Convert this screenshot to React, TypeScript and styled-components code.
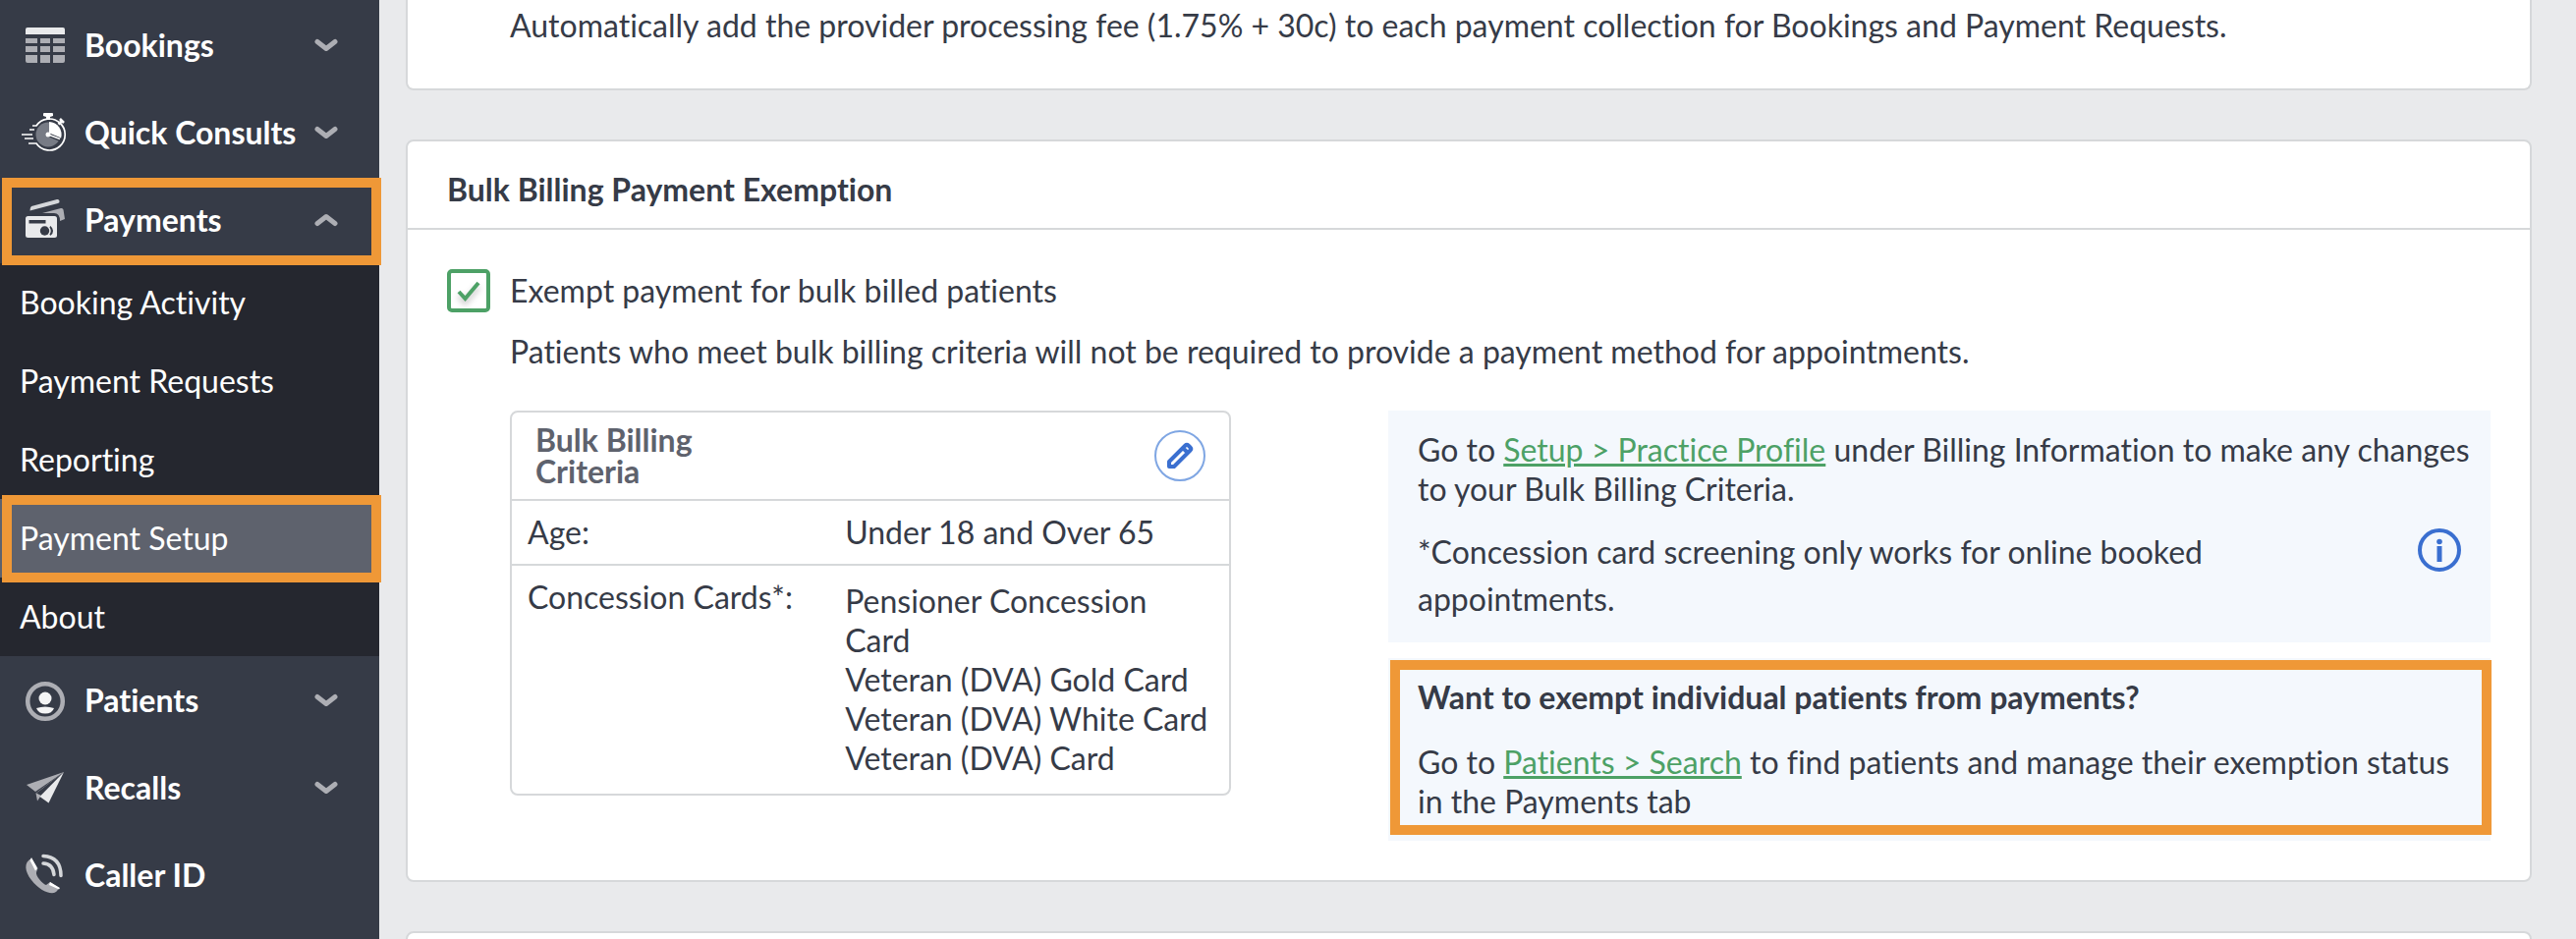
import React from 'react';
import styled, { createGlobalStyle, css } from 'styled-components';

const color = {
  nav: '#363b47',
  navSub: '#25272f',
  navActive: '#5e626d',
  navIcon: '#adaeb4',
  navIconLight: '#e9eaec',
  page: '#e9eaec',
  line: '#d6d8da',
  text: '#363b47',
  muted: '#5e626d',
  green: '#4da166',
  blue: '#3a6fd0',
  blueLight: '#7fa6e3',
  panel: '#f4f8fd',
  callout: '#ef9837',
};

const GlobalStyle = createGlobalStyle`
  *, *::before, *::after { box-sizing: border-box; }
  html { background: ${color.page}; }
  body {
    margin: 0;
    overflow: hidden;
    color: ${color.text};
    font: 400 32px/40px Lato, "Liberation Sans", sans-serif;
    font-variant-ligatures: none;
  }
  p, h2, h3, ul { margin: 0; }
`;

const Page = styled.div`
  display: flex;
  height: 100vh;
  overflow: hidden;
`;

const Sidebar = styled.nav`
  flex: 0 0 386px;
  padding-top: 1px;
  background: ${color.nav};
`;

const NavGroup = styled.div`
  position: relative;
`;

const NavButton = styled.button`
  display: flex;
  align-items: center;
  width: 100%;
  height: 89px;
  padding: 0 42px 0 20px;
  border: 0;
  background: none;
  color: #fff;
  font: inherit;
  font-variant-ligatures: none;
  font-weight: 700;
  text-align: left;
  white-space: nowrap;
  cursor: pointer;
`;

const NavIcon = styled.svg`
  flex: none;
  width: 48px;
  height: 48px;
  margin-right: 18px;
`;

const NavLabel = styled.span`
  flex: 1;
`;

const Chevron = styled.svg<{ $open?: boolean }>`
  flex: none;
  width: 24px;
  height: 14px;
  fill: none;
  stroke: ${color.navIcon};
  stroke-width: 5;
  stroke-linecap: round;
  stroke-linejoin: round;
  ${(p) => p.$open && css`transform: rotate(180deg);`}
`;

const SubMenu = styled.ul`
  padding: 0;
  list-style: none;
  background: ${color.navSub};
`;

const SubItem = styled.li`
  position: relative;
`;

const SubLink = styled.a<{ $active?: boolean }>`
  display: flex;
  align-items: center;
  height: 80px;
  padding: 0 20px;
  color: #fff;
  text-decoration: none;
  background: ${(p) => (p.$active ? color.navActive : 'transparent')};
`;

const Callout = styled.span<{ $inset: string }>`
  position: absolute;
  z-index: 1;
  inset: ${(p) => p.$inset};
  border: 10px solid ${color.callout};
  pointer-events: none;
`;

const Main = styled.main`
  flex: 1;
  min-width: 0;
  display: flex;
  flex-direction: column;
  gap: 50px;
  padding: 0 45px 0 27px;
`;

const Card = styled.section<{ $cut?: boolean }>`
  flex: none;
  border: 2px solid ${color.line};
  border-radius: 8px;
  background: #fff;
  ${(p) => p.$cut && css`
    border-top: 0;
    border-radius: 0 0 8px 8px;
  `}
`;

const FeeNote = styled.p`
  padding: 6px 40px 44px 104px;
`;

const CardTitle = styled.h2`
  padding: 29px 40px 19px;
  border-bottom: 2px solid ${color.line};
  font-size: 32px;
  line-height: 40px;
  font-weight: 700;
`;

const CardBody = styled.div`
  padding: 40px;
`;

const CheckRow = styled.label`
  display: flex;
  align-items: center;
  gap: 20px;
  cursor: pointer;
`;

const CheckBox = styled.span`
  display: grid;
  flex: none;
  width: 44px;
  height: 44px;
  > * { grid-area: 1 / 1; }
  > svg {
    place-self: center;
    width: 24px;
    height: 24px;
    fill: none;
    stroke: ${color.green};
    stroke-width: 4;
    filter: drop-shadow(0 4px 3px rgba(0, 0, 0, 0.25));
    pointer-events: none;
  }
`;

const CheckInput = styled.input`
  appearance: none;
  width: 44px;
  height: 44px;
  margin: 0;
  border: 4px solid ${color.green};
  border-radius: 5px;
  background: #fff;
  cursor: pointer;
`;

const Indented = styled.div`
  padding-left: 64px;
`;

const Description = styled.p`
  padding: 20px 0 40px;
`;

const Columns = styled.div`
  display: grid;
  grid-template-columns: 734fr 1122fr;
  align-items: start;
  column-gap: 160px;
`;

const CriteriaBox = styled.div`
  border: 2px solid ${color.line};
  border-radius: 8px;
`;

const CriteriaHead = styled.div`
  display: flex;
  align-items: center;
  justify-content: space-between;
  height: 88px;
  padding: 0 24px;
`;

const CriteriaTitle = styled.h3`
  width: 200px;
  color: ${color.muted};
  font-size: 32px;
  line-height: 32px;
  font-weight: 700;
`;

const EditButton = styled.button`
  display: grid;
  place-items: center;
  width: 52px;
  height: 52px;
  padding: 0;
  border: 2px solid ${color.blueLight};
  border-radius: 50%;
  background: #fff;
  cursor: pointer;
`;

const CriteriaTable = styled.table`
  width: 100%;
  border-collapse: separate;
  border-spacing: 0;
  table-layout: fixed;
  th, td {
    padding: 12px 16px;
    border-top: 2px solid ${color.line};
    text-align: left;
    vertical-align: top;
    font-weight: 400;
  }
  th { width: 44%; }
  td { padding-left: 18px; }
  tr + tr td { padding-top: 16px; padding-bottom: 16px; }
`;

const Side = styled.div`
  display: flex;
  flex-direction: column;
  gap: 16px;
`;

const InfoPanel = styled.div<{ $wide?: boolean }>`
  position: relative;
  padding: 20px ${(p) => (p.$wide ? 10 : 30)}px 20px 30px;
  background: ${color.panel};
`;

const PanelTitle = styled.h3`
  padding-bottom: 26px;
  font-size: 32px;
  line-height: 40px;
  font-weight: 700;
`;

const ScreeningRow = styled.div`
  display: flex;
  align-items: flex-start;
  justify-content: space-between;
  gap: 200px;
  padding: 20px 20px 0 0;
  line-height: 48px;
`;

const InfoIcon = styled.svg`
  flex: none;
  width: 44px;
  height: 44px;
`;

const TextLink = styled.a`
  color: ${color.green};
  text-decoration: underline;
  text-decoration-thickness: 3px;
`;

const NextSection = styled.div`
  min-height: 88px;
`;

const ICONS = {
  bookings: (
    <>
      <path d="M8 6h36a2 2 0 0 1 2 2v5H6V8a2 2 0 0 1 2-2z" fill="#e9eaec" />
      <path d="M6 17h12v5H6zM21 17h10v5H21zM34 17h12v5H34zM6 25h12v6H6zM21 25h10v6H21zM34 25h12v6H34zM6 34h12v8H8a2 2 0 0 1-2-2zM21 34h10v8H21zM34 34h12v6a2 2 0 0 1-2 2H34z" fill={color.navIcon} />
    </>
  ),
  quick: (
    <>
      <circle cx="29" cy="26" r="12.5" fill="#777b85" />
      <path d="M30 25V13a13 13 0 0 1 12 17z" fill="#fff" />
      <path d="M29 26l12 5" stroke={color.nav} strokeWidth="4" />
      <path d="M29 26l12 4.500" stroke="#fff" strokeWidth="1.500" />
      <circle cx="29" cy="26" r="2.500" fill="#fff" />
      <path d="M13 17h4a16 16 0 1 1 0 18h-8M10 21h5M2 26h11M5 30h9M29 6v4" fill="none" stroke="#fff" strokeWidth="1.700" />
      <path d="M25 4h8a1 1 0 0 1 1 1v2l-3 1v3h-4V8l-3-1V5a1 1 0 0 1 1-1z" fill="#fff" />
      <path d="M41 10l4 4M39.500 15.500l3-3" stroke="#fff" strokeWidth="2.500" />
    </>
  ),
  payments: (
    <>
      <path d="M12 10l26-7q2-.5 2.500 1.500t-1.500 2.500L10.500 14.500q0-3.500 1.500-4.500z" fill="#d5d7da" />
      <path d="M23 17l19-5q2-.4 2.500 1.500L46 23l-5 2q0-8-6-8z" fill={color.navIcon} />
      <rect x="6" y="20" width="32" height="22" rx="2.500" fill={color.navIconLight} />
      <path d="M9.500 24h17v3.500h-17z" fill={color.nav} />
      <circle cx="25.500" cy="35" r="4.700" fill={color.nav} />
      <path d="M31 30.800a5 5 0 0 1 0 8.400q3-4.200 0-8.400z" fill={color.nav} stroke={color.nav} strokeWidth="1.500" />
    </>
  ),
  patients: (
    <>
      <circle cx="26" cy="25" r="17.800" fill="none" stroke={color.navIcon} strokeWidth="4.500" />
      <circle cx="26" cy="22" r="6.500" fill="#f4f4f5" />
      <path d="M17 32q9-3 18 0-2 5.500-9 5.500t-9-5.500z" fill="#f4f4f5" />
    </>
  ),
  recalls: (
    <>
      <path d="M45 8L7 21l9 7z" fill={color.navIcon} />
      <path d="M45 8L16.500 29.500l1.500 8L21 33z" fill={color.navIcon} />
      <path d="M45 8L17 29.500l6 3z" fill={color.nav} />
      <path d="M45 8L20.500 33 29.500 39.500z" fill={color.navIconLight} />
    </>
  ),
  caller: (
    <>
      <path d="M12 7c-8 4-7 13 0 22s16 14 23 13c2-.3 4-3 5-5l-9-6-4 3c-3-.5-11-9-10-13l1.500-4z" fill={color.navIcon} />
      <path d="M12 6l5 9 .8 2.200L16 19.500 10.500 9zM31 31l10 6-1 1.500-10-4.500z" fill="#fff" />
      <path d="M24 4.500q18 1 18 20M24 12q10 .5 11 11.500" fill="none" stroke="#d5d7da" strokeWidth="3.500" strokeLinecap="round" />
    </>
  ),
};

function NavItem({ icon, label, arrow = true, open }: {
  icon: keyof typeof ICONS;
  label: string;
  arrow?: boolean;
  open?: boolean;
}) {
  return (
    <NavGroup>
      <NavButton type="button" aria-expanded={arrow ? !!open : undefined}>
        <NavIcon viewBox="0 0 48 48" aria-hidden="true">{ICONS[icon]}</NavIcon>
        <NavLabel>{label}</NavLabel>
        {arrow && (
          <Chevron $open={open} viewBox="0 0 24 14" aria-hidden="true">
            <path d="M3 3.500l9 7 9-7" />
          </Chevron>
        )}
      </NavButton>
      {open && <Callout $inset="2px -2px -2px 2px" />}
    </NavGroup>
  );
}

const PAYMENT_LINKS = ['Booking Activity', 'Payment Requests', 'Reporting', 'Payment Setup', 'About'];

const CARDS = [
  'Pensioner Concession Card',
  'Veteran (DVA) Gold Card',
  'Veteran (DVA) White Card',
  'Veteran (DVA) Card',
];

export default function App() {
  return (
    <>
      <GlobalStyle />
      <Page>
        <Sidebar aria-label="Main">
          <NavItem icon="bookings" label="Bookings" />
          <NavItem icon="quick" label="Quick Consults" />
          <NavItem icon="payments" label="Payments" open />
          <SubMenu>
            {PAYMENT_LINKS.map((name) => {
              const active = name === 'Payment Setup';
              return (
                <SubItem key={name}>
                  <SubLink href="#" $active={active} aria-current={active ? 'page' : undefined}>{name}</SubLink>
                  {active && <Callout $inset="-4px -2px -5px 2px" />}
                </SubItem>
              );
            })}
          </SubMenu>
          <NavItem icon="patients" label="Patients" />
          <NavItem icon="recalls" label="Recalls" />
          <NavItem icon="caller" label="Caller ID" arrow={false} />
        </Sidebar>

        <Main>
          <Card $cut>
            <FeeNote>
              Automatically add the provider processing fee (1.75% + 30c) to each payment collection for Bookings and
              Payment Requests.
            </FeeNote>
          </Card>

          <Card>
            <CardTitle>Bulk Billing Payment Exemption</CardTitle>
            <CardBody>
              <CheckRow>
                <CheckBox>
                  <CheckInput type="checkbox" defaultChecked />
                  <svg viewBox="0 0 24 24" aria-hidden="true"><path d="M2 13l6.500 7L22 4" /></svg>
                </CheckBox>
                Exempt payment for bulk billed patients
              </CheckRow>
              <Indented>
                <Description>
                  Patients who meet bulk billing criteria will not be required to provide a payment method for
                  appointments.
                </Description>
                <Columns>
                  <CriteriaBox>
                    <CriteriaHead>
                      <CriteriaTitle>Bulk Billing Criteria</CriteriaTitle>
                      <EditButton type="button" aria-label="Edit bulk billing criteria">
                        <svg width="28" height="28" viewBox="0 0 28 28" fill="none" stroke={color.blue} strokeWidth="4" strokeLinejoin="round" aria-hidden="true">
                          <path d="M3 25v-5L19.500 3.500q1.500-1.500 3 0l2 2q1.500 1.500 0 3L8 25zM17.500 6.500l4 4" />
                        </svg>
                      </EditButton>
                    </CriteriaHead>
                    <CriteriaTable>
                      <tbody>
                        <tr>
                          <th scope="row">Age:</th>
                          <td>Under 18 and Over 65</td>
                        </tr>
                        <tr>
                          <th scope="row">Concession Cards*:</th>
                          <td>{CARDS.map((card) => <div key={card}>{card}</div>)}</td>
                        </tr>
                      </tbody>
                    </CriteriaTable>
                  </CriteriaBox>

                  <Side>
                    <InfoPanel $wide>
                      <p>
                        Go to <TextLink href="#">Setup &gt; Practice Profile</TextLink> under Billing Information to
                        make any changes to your Bulk Billing Criteria.
                      </p>
                      <ScreeningRow>
                        <p>*Concession card screening only works for online booked appointments.</p>
                        <InfoIcon viewBox="0 0 44 44" aria-hidden="true">
                          <circle cx="22" cy="22" r="20" fill="none" stroke={color.blue} strokeWidth="4" />
                          <circle cx="22" cy="13.500" r="2.800" fill={color.blue} />
                          <path d="M22 18v16" stroke={color.blue} strokeWidth="5" />
                        </InfoIcon>
                      </ScreeningRow>
                    </InfoPanel>
                    <InfoPanel>
                      <PanelTitle>Want to exempt individual patients from payments?</PanelTitle>
                      <p>
                        Go to <TextLink href="#">Patients &gt; Search</TextLink> to find patients and manage their
                        exemption status in the Payments tab
                      </p>
                      <Callout $inset="2px -1px 6px 2px" />
                    </InfoPanel>
                  </Side>
                </Columns>
              </Indented>
            </CardBody>
          </Card>

          <Card>
            <NextSection />
          </Card>
        </Main>
      </Page>
    </>
  );
}
